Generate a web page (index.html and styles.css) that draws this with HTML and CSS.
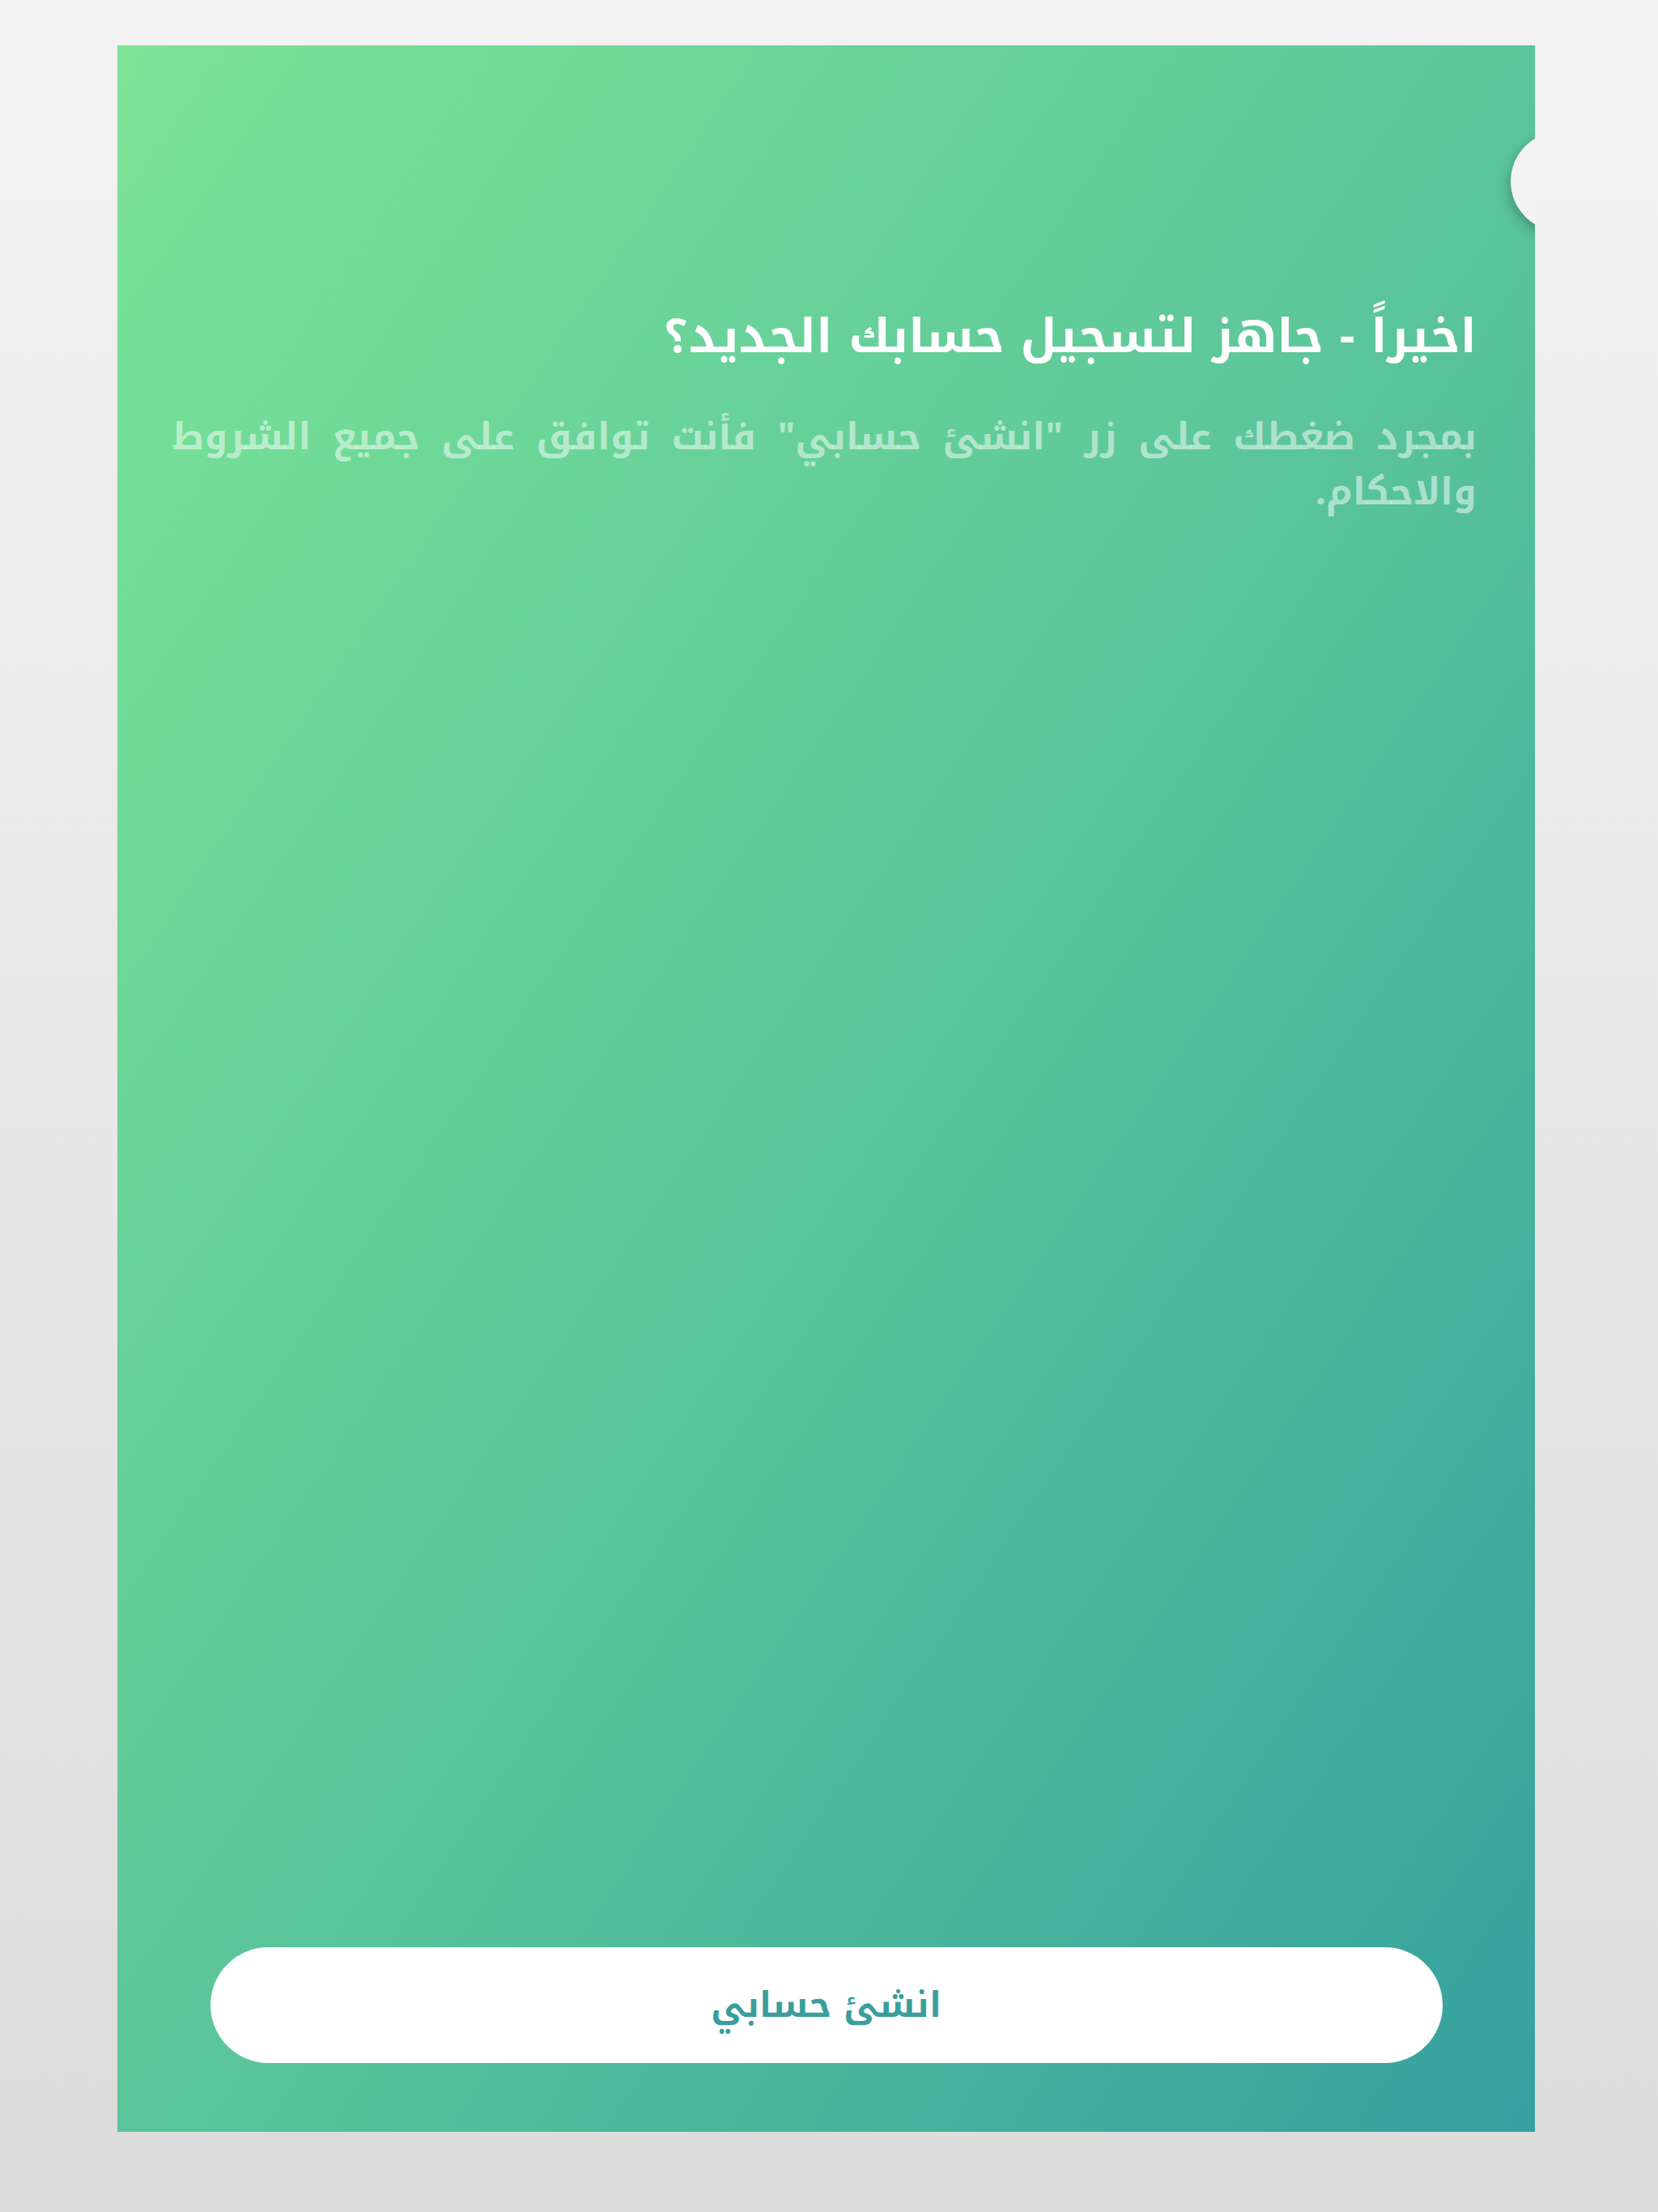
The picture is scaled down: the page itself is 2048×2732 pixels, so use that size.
FILE: index.html
```html
<!DOCTYPE html>
<html lang="ar" dir="rtl">
<head>
<meta charset="utf-8">
<title>انشئ حسابي</title>
<link rel="stylesheet" href="styles.css">
</head>
<body>
<main class="card">
  <span class="notch" aria-hidden="true"></span>
  <section class="intro">
    <h1 class="title">اخيراً - جاهز لتسجيل حسابك الجديد؟</h1>
    <p class="desc">بمجرد ضغطك على زر "انشئ حسابي" فأنت توافق على جميع الشروط والاحكام.</p>
  </section>
  <button class="cta" type="button">انشئ حسابي</button>
</main>
</body>
</html>
```
FILE: styles.css
```css
html, body {
  margin: 0;
  padding: 0;
}
body {
  min-height: 2732px;
  background: linear-gradient(to bottom, #f3f3f3 0%, #dcdcdc 100%);
  font-family: "Noto Kufi Arabic", "Droid Arabic Kufi", "Noto Sans Arabic", "DejaVu Sans", sans-serif;
}
.card {
  position: relative;
  box-sizing: border-box;
  width: 1751px;
  height: 2577px;
  margin: 56px 152px 0 0;
  overflow: hidden;
  display: flex;
  flex-direction: column;
  background: linear-gradient(to bottom right, #7be497 0%, #5cc69a 50%, #35a09e 100%);
}
.notch {
  position: absolute;
  top: 106px;
  left: 1721px;
  width: 124px;
  height: 124px;
  border-radius: 50%;
  background: #f3f3f3;
  box-shadow: -3px 6px 14px rgba(0, 0, 0, 0.22);
}
.intro {
  padding: 320px 72px 0 68px;
}
.title {
  margin: 0;
  font-size: 58.5px;
  font-weight: 700;
  line-height: 80px;
  color: #ffffff;
  text-align: right;
}
.desc {
  margin: 50px 0 0;
  font-size: 46px;
  font-weight: 700;
  line-height: 68px;
  color: rgba(255, 255, 255, 0.5);
  text-align: justify;
}
.cta {
  margin: auto auto 85px;
  width: 1522px;
  height: 143px;
  border: 0;
  border-radius: 72px;
  background: #ffffff;
  color: #3a9e9c;
  font-family: inherit;
  font-size: 44px;
  font-weight: 700;
  cursor: pointer;
}
```
